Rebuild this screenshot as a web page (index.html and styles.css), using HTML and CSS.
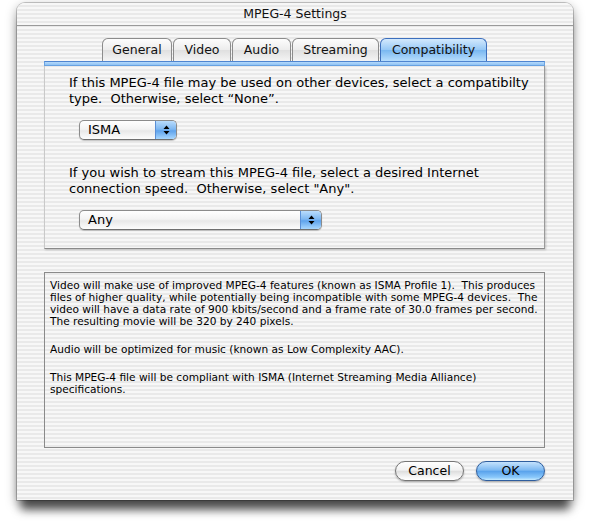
FILE: index.html
```html
<!DOCTYPE html>
<html>
<head>
<meta charset="utf-8">
<title>MPEG-4 Settings</title>
<link rel="stylesheet" href="styles.css">
</head>
<body>
<div class="window">
  <div class="titlebar">MPEG-4 Settings</div>
  <div class="content">
    <div class="tabs">
      <div class="tab tab-general">General</div>
      <div class="tab tab-video">Video</div>
      <div class="tab tab-audio">Audio</div>
      <div class="tab tab-streaming">Streaming</div>
      <div class="tab tab-compat selected">Compatibility</div>
    </div>
    <div class="strip"></div>
    <div class="panel">
      <p class="prompt">If this MPEG-4 file may be used on other devices, select a compatibilty<br>type.&nbsp; Otherwise, select “None”.</p>
      <div class="popup popup-short">
        <span class="popup-label">ISMA</span>
        <span class="popup-arrows"><svg width="7" height="10" viewBox="0 0 7 10"><path d="M3.5 0.5 L6.5 4 L0.5 4 Z M0.5 6 L6.5 6 L3.5 9.5 Z" fill="#000"/></svg></span>
      </div>
      <p class="prompt prompt-second">If you wish to stream this MPEG-4 file, select a desired Internet<br>connection speed.&nbsp; Otherwise, select "Any".</p>
      <div class="popup popup-long">
        <span class="popup-label">Any</span>
        <span class="popup-arrows"><svg width="7" height="10" viewBox="0 0 7 10"><path d="M3.5 0.5 L6.5 4 L0.5 4 Z M0.5 6 L6.5 6 L3.5 9.5 Z" fill="#000"/></svg></span>
      </div>
    </div>
    <div class="info">
      <p>Video will make use of improved MPEG-4 features (known as ISMA Profile 1).&nbsp; This produces<br>files of higher quality, while potentially being incompatible with some MPEG-4 devices.&nbsp; The<br>video will have a data rate of 900 kbits/second and a frame rate of 30.0 frames per second.<br>The resulting movie will be 320 by 240 pixels.</p>
      <p>Audio will be optimized for music (known as Low Complexity AAC).</p>
      <p>This MPEG-4 file will be compliant with ISMA (Internet Streaming Media Alliance)<br>specifications.</p>
    </div>
    <div class="buttons">
      <div class="btn btn-cancel">Cancel</div>
      <div class="btn btn-ok">OK</div>
    </div>
  </div>
</div>
</body>
</html>
```

FILE: styles.css
```css
html, body {
  margin: 0;
  padding: 0;
  background: #ffffff;
}

body {
  min-height: 524px;
  padding-top: 3px;
  box-sizing: border-box;
  font-family: "DejaVu Sans", "Liberation Sans", sans-serif;
  color: #000;
}

.window {
  box-sizing: border-box;
  width: 556px;
  height: 497px;
  margin-left: 17px;
  border-radius: 8px 8px 0 0;
  background: repeating-linear-gradient(to bottom, #f7f7f7 0px, #f7f7f7 2px, #e9e9e9 2px, #e9e9e9 4px);
  box-shadow: 0 0 0 1px rgba(0, 0, 0, 0.2), 0 14px 10px -4px rgba(0, 0, 0, 0.6), 0 4px 12px rgba(0, 0, 0, 0.4);
  display: flex;
  flex-direction: column;
}

.titlebar {
  height: 22px;
  line-height: 22px;
  border-bottom: 1px solid #9a9a9a;
  text-align: center;
  font-size: 12.5px;
  color: #111;
}

.content {
  display: flex;
  flex-direction: column;
  padding: 12px 28px 0 27px;
}

.tabs {
  display: flex;
  justify-content: center;
  gap: 1px;
  height: 23px;
}

.tab {
  box-sizing: border-box;
  height: 23px;
  border: 1px solid #8c8c8c;
  border-bottom: none;
  border-radius: 6px 6px 0 0;
  background: linear-gradient(to bottom, #fdfdfd 0%, #ececec 50%, #e0e0e0 52%, #f4f4f4 100%);
  font-size: 12.5px;
  line-height: 22px;
  text-align: center;
  color: #111;
}

.tab-general { width: 70px; }
.tab-video { width: 58px; }
.tab-audio { width: 59px; }
.tab-streaming { width: 87px; }
.tab-compat { width: 107px; }

.tab.selected {
  border-color: #3d6fbd;
  background: linear-gradient(to bottom, #d3e9fd 0%, #98c9f6 48%, #7ab8f1 52%, #b7defd 100%);
}

.strip {
  box-sizing: border-box;
  height: 5px;
  border-top: 1px solid #4f85d0;
  border-bottom: 1px solid #6aa4e4;
  border-left: 1px solid #6aa4e4;
  border-right: 1px solid #6aa4e4;
  background: linear-gradient(to bottom, #b5d9fb, #8fc3f4);
}

.panel {
  box-sizing: border-box;
  height: 183px;
  padding: 9px 24px 0 24px;
  border-left: 1px solid #c9c9c9;
  border-right: 1px solid #9a9a9a;
  border-bottom: 1px solid #8a8a8a;
  box-shadow: 1px 1px 2px rgba(0, 0, 0, 0.2);
  display: flex;
  flex-direction: column;
  align-items: flex-start;
}

.prompt {
  margin: 0;
  font-size: 13px;
  line-height: 16px;
  white-space: nowrap;
}

.prompt-second {
  margin-top: 25px;
}

.popup {
  box-sizing: border-box;
  height: 20px;
  margin: 13px 0 0 10px;
  border: 1px solid #8b8b8b;
  border-bottom-color: #6f6f6f;
  border-radius: 5px;
  background: linear-gradient(to bottom, #ffffff 0%, #f3f3f3 45%, #e8e8e8 55%, #fdfdfd 100%);
  box-shadow: 0 1px 1px rgba(0, 0, 0, 0.2);
  display: flex;
  align-items: stretch;
  overflow: hidden;
}

.popup-short { width: 98px; }
.popup-long { width: 243px; }

.popup-label {
  flex: 1;
  padding-left: 8px;
  font-size: 13px;
  line-height: 18px;
}

.popup-arrows {
  width: 20px;
  border-left: 1px solid #5a8fd6;
  background: linear-gradient(to bottom, #b9dcfd 0%, #7fb8f1 45%, #5fa3ec 55%, #a9d8ff 100%);
  display: flex;
  align-items: center;
  justify-content: center;
}

.info {
  box-sizing: border-box;
  height: 176px;
  margin-top: 23px;
  border: 1px solid #8a8a8a;
  padding: 6px 5px 0 5px;
}

.info p {
  margin: 0;
  font-size: 10.6px;
  line-height: 12px;
  white-space: nowrap;
}

.info p + p {
  margin-top: 16px;
}

.buttons {
  display: flex;
  justify-content: flex-end;
  gap: 12px;
  margin-top: 13px;
}

.btn {
  box-sizing: border-box;
  width: 69px;
  height: 20px;
  border-radius: 10px;
  font-size: 12.5px;
  line-height: 18px;
  text-align: center;
  box-shadow: 0 1px 2px rgba(0, 0, 0, 0.3);
}

.btn-cancel {
  border: 1px solid #767676;
  background: linear-gradient(to bottom, #ffffff 0%, #f2f2f2 45%, #dedede 52%, #f7f7f7 85%, #ffffff 100%);
}

.btn-ok {
  border: 1px solid #2f5e9e;
  background: linear-gradient(to bottom, #c4e2fd 0%, #7db9f2 45%, #5aa3ec 52%, #8ac8fb 85%, #c8ecff 100%);
}
```
